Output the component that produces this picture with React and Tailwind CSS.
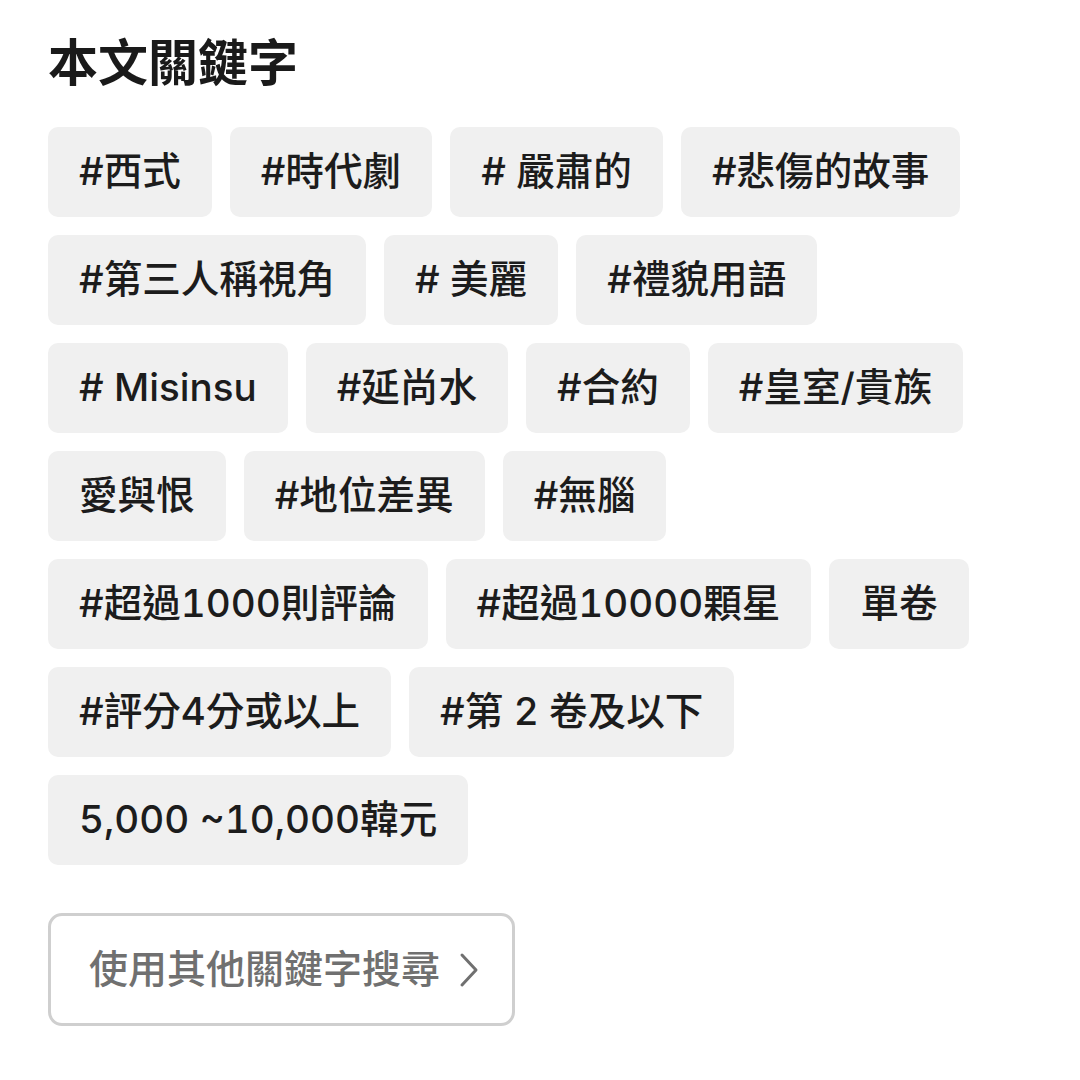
import React from "react";

const tags = [
  "#西式",
  "#時代劇",
  "# 嚴肅的",
  "#悲傷的故事",
  "#第三人稱視角",
  "# 美麗",
  "#禮貌用語",
  "# Misinsu",
  "#延尚水",
  "#合約",
  "#皇室/貴族",
  "愛與恨",
  "#地位差異",
  "#無腦",
  "#超過1000則評論",
  "#超過10000顆星",
  "單卷",
  "#評分4分或以上",
  "#第 2 卷及以下",
  "5,000 ~10,000韓元",
];

export default function App() {
  return (
    <div
      className="w-[1080px] h-[1080px] bg-white px-12 pt-[30px]"
      style={{ fontFamily: '"Inter", "Noto Sans CJK TC", sans-serif' }}
    >
      <h2 className="text-[50px] leading-[66px] font-bold text-[#1a1a1a]">
        本文關鍵字
      </h2>
      <div className="mt-[31px] flex flex-wrap gap-[18px] pr-[50px]">
        {tags.map((t) => (
          <span
            key={t}
            className="h-[90px] flex items-center px-[31px] rounded-[10px] bg-[#f0f0f0] text-[38.6px] font-medium tabular-nums text-[#1c1c1c] whitespace-pre"
          >
            {t}
          </span>
        ))}
      </div>
      <button className="mt-[48px] w-[467px] h-[113px] flex items-center pl-[38px] gap-[18px] border-[3px] border-[#cfcfcf] rounded-[14px] bg-white text-[39px] font-medium text-[#707070]">
        <span>使用其他關鍵字搜尋</span>
        <svg width="22" height="38" viewBox="0 0 22 38" fill="none">
          <path d="M4 4 L18 19 L4 34" stroke="#707070" strokeWidth="3" strokeLinecap="round" strokeLinejoin="round" />
        </svg>
      </button>
    </div>
  );
}
